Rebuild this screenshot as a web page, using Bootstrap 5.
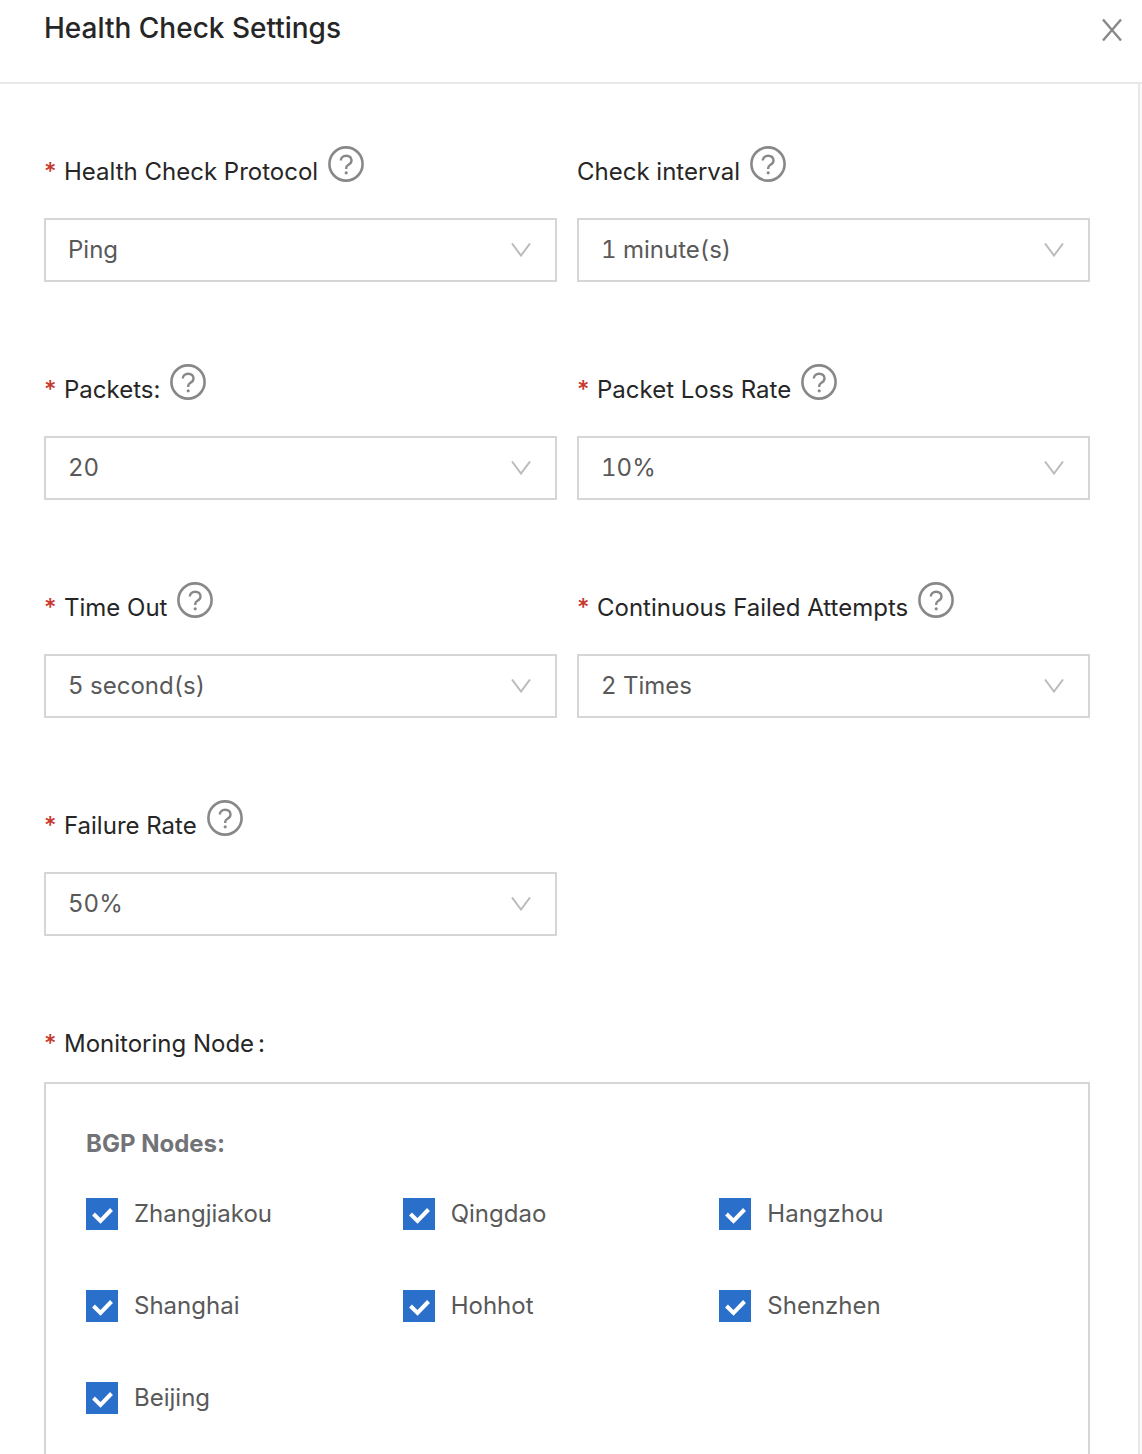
<!DOCTYPE html>
<html lang="en">
<head>
<meta charset="utf-8">
<meta name="viewport" content="width=device-width, initial-scale=1">
<title>Health Check Settings</title>
<link rel="stylesheet" href="https://cdn.jsdelivr.net/npm/bootstrap@5.3.0/dist/css/bootstrap.min.css">
<style>
  body { font-family: Inter, "Liberation Sans", sans-serif; font-size: 24px; line-height: 36px; color: #262626; background: #fff; }
  .panel-head { padding: 10px 20px 36px 44px; border-bottom: 2px solid #e6e8ea; }
  .panel-title { font-size: 28px; line-height: 36px; font-weight: 500; }
  .btn-icon { display: flex; padding: 0; border: 0; background: none; color: #888; }
  .panel-main { padding: 62px 48px 0 44px; border-right: 2px solid #e8e8e8; overflow: hidden; }
  .panel-gutter { flex: none; width: 2px; background: #fafafa; }
  .field-grid { --bs-gutter-x: 20px; --bs-gutter-y: 82px; }
  .field-head { height: 44px; gap: 10px; margin-bottom: 28px; }
  .field-head.compact { margin-bottom: 20px; }
  .required::before { content: "*"; color: #c8382e; font-weight: 500; display: inline-block; width: 20px; }
  .form-select {
    height: 64px; padding: 0 60px 0 22px; border: 2px solid #d6d6d6; border-radius: 0;
    font-size: 24px; line-height: 36px; color: #595959; font-variant-numeric: tabular-nums;
    background-image: url("data:image/svg+xml,%3Csvg xmlns='http://www.w3.org/2000/svg' viewBox='0 0 20 14'%3E%3Cpath d='M1 .5l9 12 9-12' fill='none' stroke='%23bbb' stroke-width='2'/%3E%3C/svg%3E");
    background-size: 20px 14px; background-position: right 24px center;
  }
  .node-box { border: 2px solid #d6d6d6; padding: 42px 52px 60px 40px; color: #595959; }
  .node-title { font-size: 24px; line-height: 36px; font-weight: 700; color: #717377; margin-bottom: 34px; }
  .node-grid { --bs-gutter-x: 0; --bs-gutter-y: 56px; }
  .node-item { display: flex; align-items: center; gap: 16px; padding: 0; margin: 0; min-height: 36px; }
  .node-item .form-check-input { width: 32px; height: 32px; margin: 0; border: 0; border-radius: 0; float: none; flex: none; }
  .node-item .form-check-input:checked {
    background-color: #2a6fc9; background-size: 32px 32px;
    background-image: url("data:image/svg+xml,%3Csvg xmlns='http://www.w3.org/2000/svg' viewBox='0 0 32 32'%3E%3Cpath d='M7.500 16l7 7L25.500 11.500' fill='none' stroke='%23fff' stroke-width='4'/%3E%3C/svg%3E");
  }
</style>
<script src="https://cdn.jsdelivr.net/npm/bootstrap@5.3.0/dist/js/bootstrap.bundle.min.js"></script>
</head>
<body>
<svg class="d-none" aria-hidden="true">
  <symbol id="help" viewBox="0 0 36 36">
    <circle cx="18" cy="18" r="16.600" fill="none" stroke="currentColor" stroke-width="2.600"/>
    <path d="M12.800 14.600C12.800 11.700 15 9.700 18.200 9.700s5.300 1.900 5.300 4.700c0 2-1.200 3.300-3 4.400-1.700 1-2.300 1.700-2.300 3.200V23" fill="none" stroke="currentColor" stroke-width="2.400"/>
    <circle cx="18.200" cy="26.800" r="1.600" fill="currentColor"/>
  </symbol>
</svg>
<div class="d-flex flex-column vh-100 overflow-hidden">
  <header class="panel-head d-flex justify-content-between align-items-start">
    <h1 class="panel-title m-0">Health Check Settings</h1>
    <button type="button" class="btn-icon mt-2" aria-label="Close">
      <svg width="20" height="24" viewBox="0 0 20 24" fill="none" stroke="currentColor" stroke-width="2.400"><path d="M1 1.500l18 21M19 1.500L1 22.500"/></svg>
    </button>
  </header>
  <div class="d-flex flex-grow-1 overflow-hidden">
    <main class="panel-main flex-grow-1">
      <form>
        <div class="row field-grid">
          <div class="col-6">
            <div class="field-head d-flex"><label class="required align-self-end" for="protocol">Health Check Protocol</label><button type="button" class="btn-icon align-self-start" aria-label="Help"><svg width="36" height="36"><use href="#help"/></svg></button></div>
            <select class="form-select" id="protocol"><option>Ping</option></select>
          </div>
          <div class="col-6">
            <div class="field-head d-flex"><label class="align-self-end" for="interval">Check interval</label><button type="button" class="btn-icon align-self-start" aria-label="Help"><svg width="36" height="36"><use href="#help"/></svg></button></div>
            <select class="form-select" id="interval"><option>1 minute(s)</option></select>
          </div>
          <div class="col-6">
            <div class="field-head d-flex"><label class="required align-self-end" for="packets">Packets:</label><button type="button" class="btn-icon align-self-start" aria-label="Help"><svg width="36" height="36"><use href="#help"/></svg></button></div>
            <select class="form-select" id="packets"><option>20</option></select>
          </div>
          <div class="col-6">
            <div class="field-head d-flex"><label class="required align-self-end" for="loss">Packet Loss Rate</label><button type="button" class="btn-icon align-self-start" aria-label="Help"><svg width="36" height="36"><use href="#help"/></svg></button></div>
            <select class="form-select" id="loss"><option>10%</option></select>
          </div>
          <div class="col-6">
            <div class="field-head d-flex"><label class="required align-self-end" for="timeout">Time Out</label><button type="button" class="btn-icon align-self-start" aria-label="Help"><svg width="36" height="36"><use href="#help"/></svg></button></div>
            <select class="form-select" id="timeout"><option>5 second(s)</option></select>
          </div>
          <div class="col-6">
            <div class="field-head d-flex"><label class="required align-self-end" for="attempts">Continuous Failed Attempts</label><button type="button" class="btn-icon align-self-start" aria-label="Help"><svg width="36" height="36"><use href="#help"/></svg></button></div>
            <select class="form-select" id="attempts"><option>2 Times</option></select>
          </div>
          <div class="col-6">
            <div class="field-head d-flex"><label class="required align-self-end" for="failure">Failure Rate</label><button type="button" class="btn-icon align-self-start" aria-label="Help"><svg width="36" height="36"><use href="#help"/></svg></button></div>
            <select class="form-select" id="failure"><option>50%</option></select>
          </div>
          <div class="col-12" role="group" aria-labelledby="nodes-label">
            <div class="field-head compact d-flex"><span class="required align-self-end" id="nodes-label">Monitoring Node<span class="ms-1">:</span></span></div>
            <div class="node-box">
              <h2 class="node-title">BGP Nodes:</h2>
              <div class="row node-grid">
                <div class="col-4"><div class="form-check node-item"><input class="form-check-input" type="checkbox" id="n1" checked><label for="n1">Zhangjiakou</label></div></div>
                <div class="col-4"><div class="form-check node-item"><input class="form-check-input" type="checkbox" id="n2" checked><label for="n2">Qingdao</label></div></div>
                <div class="col-4"><div class="form-check node-item"><input class="form-check-input" type="checkbox" id="n3" checked><label for="n3">Hangzhou</label></div></div>
                <div class="col-4"><div class="form-check node-item"><input class="form-check-input" type="checkbox" id="n4" checked><label for="n4">Shanghai</label></div></div>
                <div class="col-4"><div class="form-check node-item"><input class="form-check-input" type="checkbox" id="n5" checked><label for="n5">Hohhot</label></div></div>
                <div class="col-4"><div class="form-check node-item"><input class="form-check-input" type="checkbox" id="n6" checked><label for="n6">Shenzhen</label></div></div>
                <div class="col-4"><div class="form-check node-item"><input class="form-check-input" type="checkbox" id="n7" checked><label for="n7">Beijing</label></div></div>
              </div>
            </div>
          </div>
        </div>
      </form>
    </main>
    <div class="panel-gutter"></div>
  </div>
</div>
</body>
</html>
